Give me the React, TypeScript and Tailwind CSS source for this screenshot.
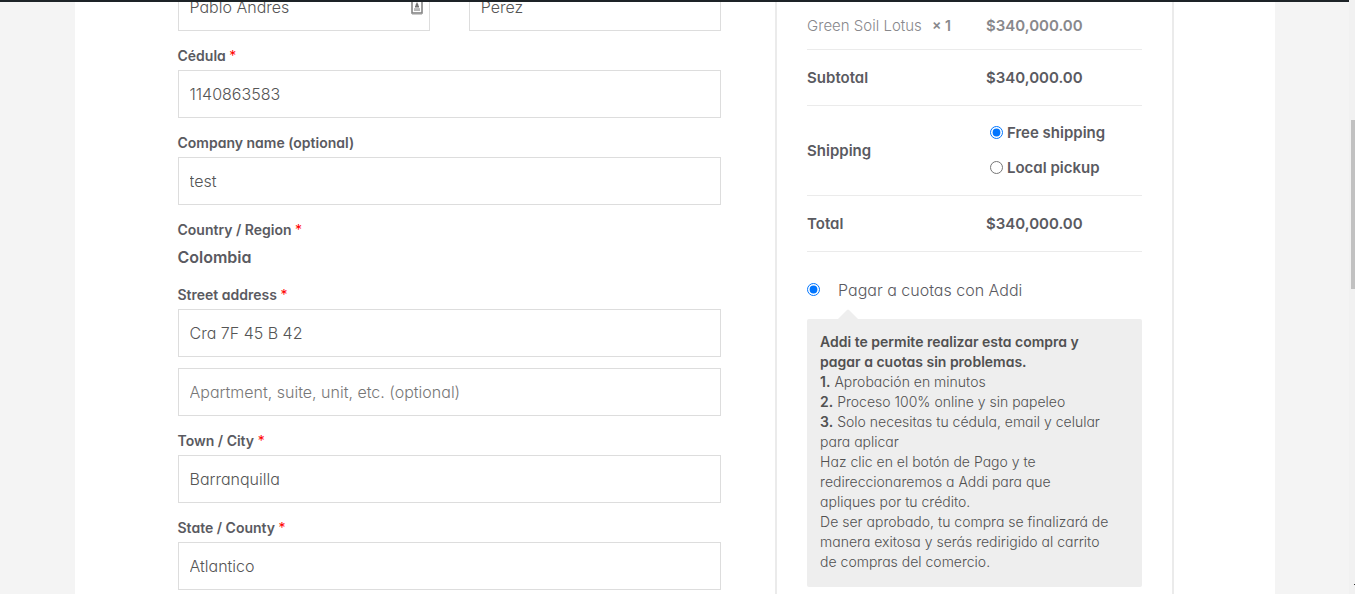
import type { ReactNode } from "react";

type FieldProps = {
  id: string;
  label: string;
  value: string;
  required?: boolean;
  children?: ReactNode;
};

const inputClass =
  "block h-12 w-full rounded-none border border-[#dddddd] bg-white px-[11px] pb-px text-base font-light text-[#555555] outline-none placeholder:text-[#777777]";

const labelClass = "mb-1 block text-sm leading-5 font-semibold text-[#5a5a61]";

function Required() {
  return (
    <abbr title="required" className="font-normal text-[#ff0000] no-underline">
      *
    </abbr>
  );
}

function Field({ id, label, value, required, children }: FieldProps) {
  return (
    <div>
      <label htmlFor={id} className={labelClass}>
        {label} {required && <Required />}
      </label>
      <input id={id} type="text" defaultValue={value} className={inputClass} />
      {children}
    </div>
  );
}

function ContactIcon() {
  return (
    <svg
      viewBox="0 0 12 16"
      className="pointer-events-none absolute top-4 right-[7px] h-4 w-3"
      aria-hidden="true"
    >
      <rect x="1" y="1" width="10" height="13" fill="#ffffff" stroke="#858585" strokeWidth="1.6" />
      <path d="M6 3 L7.500 6 V8 H4.500 V6 Z" fill="#777777" />
      <rect x="4" y="7" width="4" height="1.500" fill="#777777" />
      <rect x="3" y="9.500" width="6" height="1" fill="#888888" />
      <rect x="3" y="10.500" width="6" height="1.500" fill="#b5b5b5" />
      <rect x="1" y="15" width="10" height="1" fill="#cccccc" />
    </svg>
  );
}

function BillingForm() {
  return (
    <form className="-mt-[19px] flex min-w-0 flex-1 flex-col gap-[15px]">
      <div className="grid grid-cols-2 gap-[39px]">
        <div className="relative">
          <input aria-label="First name" type="text" defaultValue="Pablo Andres" className={inputClass} />
          <ContactIcon />
        </div>
        <input aria-label="Last name" type="text" defaultValue="Perez" className={inputClass} />
      </div>
      <Field id="cedula" label="Cédula" value="1140863583" required />
      <Field id="company" label="Company name (optional)" value="test" />
      <div>
        <span className={labelClass}>
          Country / Region <Required />
        </span>
        <strong className="block text-base leading-[26px] font-semibold">Colombia</strong>
      </div>
      <Field id="street" label="Street address" value="Cra 7F 45 B 42" required>
        <input
          aria-label="Apartment"
          type="text"
          placeholder="Apartment, suite, unit, etc. (optional)"
          className={`${inputClass} mt-[11px]`}
        />
      </Field>
      <Field id="city" label="Town / City" value="Barranquilla" required />
      <Field id="state" label="State / County" value="Atlantico" required />
    </form>
  );
}

function OrderTable() {
  return (
    <table className="w-full table-fixed border-collapse text-left text-[15px] font-semibold">
      <colgroup>
        <col className="w-[53.5%]" />
        <col />
      </colgroup>
      <tbody>
        <tr className="h-[47px] border-b border-[#ebebeb] text-[#88888c]">
          <td className="pt-0.5 font-light whitespace-nowrap">
            Green Soil Lotus <strong className="ml-1.5 text-sm font-semibold">× 1</strong>
          </td>
          <td className="pt-0.5">$340,000.00</td>
        </tr>
        <tr className="h-14 border-b border-[#ebebeb]">
          <th className="pt-0.5 font-semibold">Subtotal</th>
          <td className="pt-0.5">$340,000.00</td>
        </tr>
        <tr className="h-[90px] border-b border-[#ebebeb]">
          <th className="pt-0.5 font-semibold">Shipping</th>
          <td className="pl-1">
            <div className="flex flex-col">
              <label className="flex h-[35px] items-center gap-1">
                <input type="radio" name="shipping" defaultChecked className="m-0 size-[13px]" />
                <span className="pt-0.5">Free shipping</span>
              </label>
              <label className="flex h-[35px] items-center gap-1">
                <input type="radio" name="shipping" className="m-0 size-[13px]" />
                <span className="pt-0.5">Local pickup</span>
              </label>
            </div>
          </td>
        </tr>
        <tr className="h-14 border-b border-[#ebebeb]">
          <th className="pt-0.5 font-semibold">Total</th>
          <td className="pt-0.5">$340,000.00</td>
        </tr>
      </tbody>
    </table>
  );
}

function Payment() {
  return (
    <section className="pt-6">
      <label className="flex h-7 items-center gap-[18px] text-base font-light">
        <input type="radio" name="payment" defaultChecked className="m-0 size-[13px]" />
        Pagar a cuotas con Addi
      </label>
      <svg viewBox="0 0 20 10" className="mt-[5px] ml-[31px] block h-[10px] w-5" aria-hidden="true">
        <path d="M0 10 L9 1 Q10 0 11 1 L20 10 Z" fill="#eeeeee" />
      </svg>
      <div className="rounded-xs bg-[#eeeeee] px-[13px] pt-[13px] pb-[15px] text-sm leading-5 font-light text-[#515151]">
        <p className="font-semibold">
          Addi te permite realizar esta compra y
          <br />
          pagar a cuotas sin problemas.
        </p>
        <p>
          <b className="font-semibold">1.</b> Aprobación en minutos
        </p>
        <p>
          <b className="font-semibold">2.</b> Proceso 100% online y sin papeleo
        </p>
        <p>
          <b className="font-semibold">3.</b> Solo necesitas tu cédula, email y celular
          <br />
          para aplicar
        </p>
        <p>
          Haz clic en el botón de Pago y te
          <br />
          redireccionaremos a Addi para que
          <br />
          apliques por tu crédito.
        </p>
        <p>
          De ser aprobado, tu compra se finalizará de
          <br />
          manera exitosa y serás redirigido al carrito
          <br />
          de compras del comercio.
        </p>
      </div>
    </section>
  );
}

export default function App() {
  return (
    <div className="flex h-screen overflow-hidden bg-[#f4f4f4] font-['Inter',sans-serif] text-[#5a5a61] [font-feature-settings:'cv11']">
      <div className="flex min-w-0 flex-1 flex-col">
        <header className="h-[2px] shrink-0 bg-[#1d2327]" />
        <main className="mx-auto flex min-h-0 w-full max-w-[1200px] flex-1 gap-[54px] overflow-hidden bg-white pr-[101px] pl-[103px]">
          <BillingForm />
          <aside className="w-2/5 shrink-0 border-x-2 border-[#ebebeb] px-[30px]">
            <OrderTable />
            <Payment />
          </aside>
        </main>
      </div>
      <div className="flex w-[6px] shrink-0 flex-col items-end bg-[#f1f1f1] pt-[120px]" aria-hidden="true">
        <div className="h-[169px] w-1 bg-[#c1c1c1]" />
        <div className="mt-[295px] h-px w-px bg-[#333333]" />
      </div>
    </div>
  );
}
